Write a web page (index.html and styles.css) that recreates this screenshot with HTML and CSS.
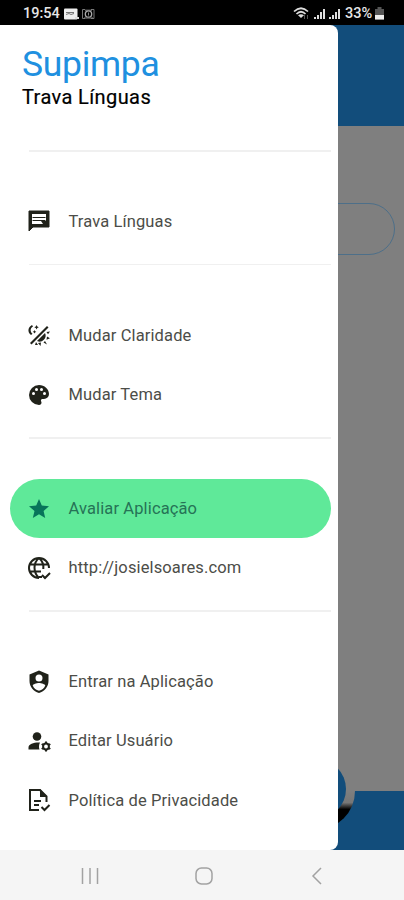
FILE: index.html
```html
<!DOCTYPE html>
<html lang="pt-BR">
<head>
<meta charset="utf-8">
<meta name="viewport" content="width=device-width, initial-scale=1">
<title>Supimpa - Trava Línguas</title>
<link rel="stylesheet" href="styles.css">
</head>
<body>
<div class="phone">
  <header class="status">
    <span class="clock">19:54</span>
    <svg class="status-left" width="34" height="14" viewBox="0 0 34 14">
      <rect x="1" y="1.5" width="13.5" height="11" rx="1" fill="#eee"/>
      <path d="M3 5.5h8M3 7.500l3-1 2 1 3-1" stroke="#777" fill="none"/>
      <path d="M12 10h4v2h-4z" fill="#ddd"/>
      <path d="M22 2.500h-2.500v9H22M28 2.500h3v9h-3" stroke="#777" fill="none"/>
      <circle cx="25.500" cy="7" r="3.200" stroke="#aaa" fill="none" stroke-width="1.300"/>
      <path d="M22 3.200h7M25.500 5.500v3M21 11h9" stroke="#888" fill="none"/>
    </svg>
    <svg class="status-right" width="50" height="16" viewBox="0 0 50 16">
      <path d="M1 5.500Q8 -1 15 5.500M3.500 8Q8 3.500 12.500 8" stroke="#ddd" stroke-width="1.700" fill="none"/>
      <path d="M5 9.300Q8 7 11 9.300L8 12z" fill="#ddd"/>
      <path d="M11.500 9v4M14.500 9v4" stroke="#555"/>
      <path d="M22 13v-2M25 13v-4M28 13V6M31 13V3" stroke="#ddd" stroke-width="2"/>
      <path d="M37 13v-2M40 13v-4M43 13V6M46 13V3" stroke="#ddd" stroke-width="2"/>
    </svg>
    <span class="percent">33%</span>
    <svg class="battery" width="9" height="13" viewBox="0 0 9 13">
      <path d="M2.500 0h4v2H9v10.500H0V2h2.500z" fill="#555"/><path d="M0 8h9v4.500H0z" fill="#eee"/>
    </svg>
  </header>

  <main class="stage">
    <div class="app">
      <div class="app-bar"></div>
      <div class="app-body"><div class="field"></div></div>
      <svg class="bottom-bar" width="404" height="90" viewBox="0 0 404 90">
        <defs>
          <linearGradient id="shade" x1="0" y1="0" x2="0" y2="1">
            <stop offset="0" stop-color="#7f7f7f"/><stop offset=".3" stop-color="#777"/><stop offset=".47" stop-color="#000"/><stop offset="1" stop-color="#000"/>
          </linearGradient>
        </defs>
        <path d="M0 31h404v59H0z" fill="#124d7b"/>
        <path d="M277 31h78A39 39 0 0 1 277 31z" fill="url(#shade)"/>
        <circle cx="316" cy="29" r="30" fill="#124d7b"/>
      </svg>
    </div>

    <nav class="drawer">
      <div class="brand">
        <h1>Supimpa</h1>
        <h2>Trava Línguas</h2>
      </div>
      <div class="divider"></div>
      <a class="item">
        <svg class="icon" viewBox="0 0 24 24"><path fill-rule="evenodd" d="M2 2h20v16H6l-4 4zM5 5v10h14V5z"/><path d="M2 2h20v16H6l-4 4z" class="line"/><path d="M5.500 8h13v1h-13zM5.500 11h13v1h-13zM14 12h5v3h-3z"/></svg>
        <span>Trava Línguas</span>
      </a>
      <div class="divider"></div>
      <a class="item">
        <svg class="icon" viewBox="0 0 24 24"><path d="M3 20 20 3l1.500 1.500-17 17z"/><path d="M5 2C1 4 0 9 4 12l1.500-1.200C3 9 3 5 6 3.500zM9.500 2l.8 1.500 1.500.7-1.500.7-.8 1.500-.7-1.500-1.500-.7 1.500-.7zM7.500 7l.6 1.200 1.200.6-1.200.6-.6 1.200-.6-1.200-1.200-.6L6.900 8.200zM18 10a6 6 0 0 1-8 8zM19.500 9l3.500-.5-2 2.800zM20 13.500l3 1.800-3.500 1.500zM18 18l2 3.500-3.500-2zM14 19.500l-.5 3.500-2.500-3zM9 19l-1 3h3z"/></svg>
        <span>Mudar Claridade</span>
      </a>
      <a class="item">
        <svg class="icon" viewBox="0 0 24 24"><path fill-rule="evenodd" d="M12 2a10 10 0 0 0 0 20c1.700 0 2.500-1 2.500-2.200 0-1-.6-1.400-.6-2.200 0-.9.700-1.600 1.600-1.600H17a5 5 0 0 0 5-5C22 6 17.500 2 12 2zM6.500 9a1.500 1.500 0 1 0 0 3 1.500 1.500 0 0 0 0-3zM9.500 5a1.500 1.500 0 1 0 0 3 1.500 1.500 0 0 0 0-3zM14.500 5a1.500 1.500 0 1 0 0 3 1.500 1.500 0 0 0 0-3zM17.500 9a1.500 1.500 0 1 0 0 3 1.500 1.500 0 0 0 0-3z"/></svg>
        <span>Mudar Tema</span>
      </a>
      <div class="divider"></div>
      <a class="item active">
        <svg class="icon" viewBox="0 0 24 24"><path d="m12 17.300 6.200 3.700-1.600-7L22 9.200l-7.200-.6L12 2 9.200 8.600 2 9.200 7.500 14l-1.700 7z"/></svg>
        <span>Avaliar Aplicação</span>
      </a>
      <a class="item">
        <svg class="icon" viewBox="0 0 24 24"><g class="stroke"><path d="M22 12A10 10 0 1 0 12 22M12 2C6 7 6 16 12 22M12 2c3.500 3 4.800 6.500 4.300 11M3 8.500h18M3 15.500h11M12 21h3"/><path d="m15 19 3 3 5-5"/></g></svg>
        <span>http://josielsoares.com</span>
      </a>
      <div class="divider"></div>
      <a class="item">
        <svg class="icon" viewBox="0 0 24 24"><path fill-rule="evenodd" d="M12 .5 2.500 4.500V11c0 5.500 3.800 10.700 9.500 12 5.700-1.300 9.500-6.500 9.500-12V4.500zM12 4.500a3.500 3.500 0 1 1 0 7 3.500 3.500 0 0 1 0-7zM12 13c2.500 0 6 1.200 6.300 2.500A9 9 0 0 1 12 20.800a9 9 0 0 1-6.300-5.300C6 14.200 9.500 13 12 13z"/></svg>
        <span>Entrar na Aplicação</span>
      </a>
      <a class="item">
        <svg class="icon" viewBox="0 0 24 24"><circle cx="10" cy="7.500" r="4.300"/><path d="M11.500 13.500c-5 0-10 1.500-10 5V20.500h11c-.8-2-.7-4.500.5-7z"/><circle cx="19" cy="17.500" r="2.900" class="stroke"/><path class="teeth" d="M19 12.500v2M19 20.500v2M14.700 15l1.700 1M21.600 19l1.700 1M14.700 20l1.700-1M21.600 16l1.700-1"/></svg>
        <span>Editar Usuário</span>
      </a>
      <a class="item">
        <svg class="icon" viewBox="0 0 24 24"><path class="stroke" d="M12 22H3V2h10l6.500 6.500V14M7 13h7M7 17h5M14.500 19l3 3 5-5"/><path d="M13 1v8h7z"/></svg>
        <span>Política de Privacidade</span>
      </a>
    </nav>
  </main>

  <footer class="keys">
    <svg width="18" height="18" viewBox="0 0 18 18"><path d="M1.500 1v16M9 1v16M16.500 1v16"/></svg>
    <svg width="18" height="18" viewBox="0 0 18 18"><rect x="1" y="1" width="16" height="16" rx="5.500"/></svg>
    <svg width="18" height="18" viewBox="0 0 18 18"><path d="M13 1 5 9l8 8"/></svg>
  </footer>
</div>
</body>
</html>
```
FILE: styles.css
```css
* { box-sizing: border-box; }
body { margin: 0; font-family: Roboto, "Liberation Sans", sans-serif; background: #fff; }
.phone { width: 404px; height: 900px; display: flex; flex-direction: column; overflow: hidden; }

.status { height: 25px; flex: none; background: #000; color: #e6e6e6; display: flex; align-items: center; padding: 2px 20px 0 23px; font-size: 14.5px; font-weight: 500; }
.clock { width: 37px; letter-spacing: 0; }
.status-left { margin-left: 3px; }
.status-right { margin-left: auto; margin-right: 2px; }
.percent { width: 29px; letter-spacing: 0; }
.battery { margin-left: 1px; }

.stage { position: relative; height: 825px; flex: none; background: #124d7b; }
.app { height: 100%; display: flex; flex-direction: column; }
.app-bar { height: 101px; background: #124d7b; }
.app-body { flex: 1; background: #7f7f7f; padding: 77px 9px 0; }
.field { height: 52px; border: 1px solid #4d6f89; border-radius: 26px; }
.bottom-bar { display: block; background: #7f7f7f; }

.drawer { position: absolute; inset: 0 auto 0 0; width: 338px; background: #fff; border-radius: 0 8px 8px 0; padding: 0 7px 0 9.5px; overflow: hidden; }
.brand { height: 112px; padding: 19px 0 0 12.5px; }
h1, h2 { margin: 0; white-space: nowrap; }
h1 { font-size: 35.5px; line-height: 41px; font-weight: 400; color: #2090e0; letter-spacing: -0.3px; }
h2 { font-size: 20px; line-height: 24px; font-weight: 400; color: #000; -webkit-text-stroke: 0.2px #000; letter-spacing: 0.4px; }
.divider { height: 54.8px; padding-top: 13px; margin-left: 19.5px; }
.divider::before { content: ""; display: block; height: 1.5px; background: #f0f0f0; }
.item { height: 59.2px; width: 321px; display: flex; align-items: center; gap: 18px; padding: 0 17px; border-radius: 30px; color: #4c4d48; font-size: 16.5px; letter-spacing: 0.12px; white-space: nowrap; }
.icon { width: 24px; height: 24px; flex: none; fill: #20221a; }
.active { background: #5fe999; color: #267356; }
.active .icon { fill: #08745a; }
.stroke { fill: none; stroke: #20221a; stroke-width: 2; }
.line { fill: none; stroke: #20221a; stroke-width: 1; }
.teeth { fill: none; stroke: #20221a; stroke-width: 2; }

.keys { height: 50px; flex: none; background: #f5f5f5; display: flex; justify-content: space-between; align-items: center; padding: 1px 78px 0 81px; }
.keys svg { fill: none; stroke: #a2a2a2; stroke-width: 1.5; }
```
